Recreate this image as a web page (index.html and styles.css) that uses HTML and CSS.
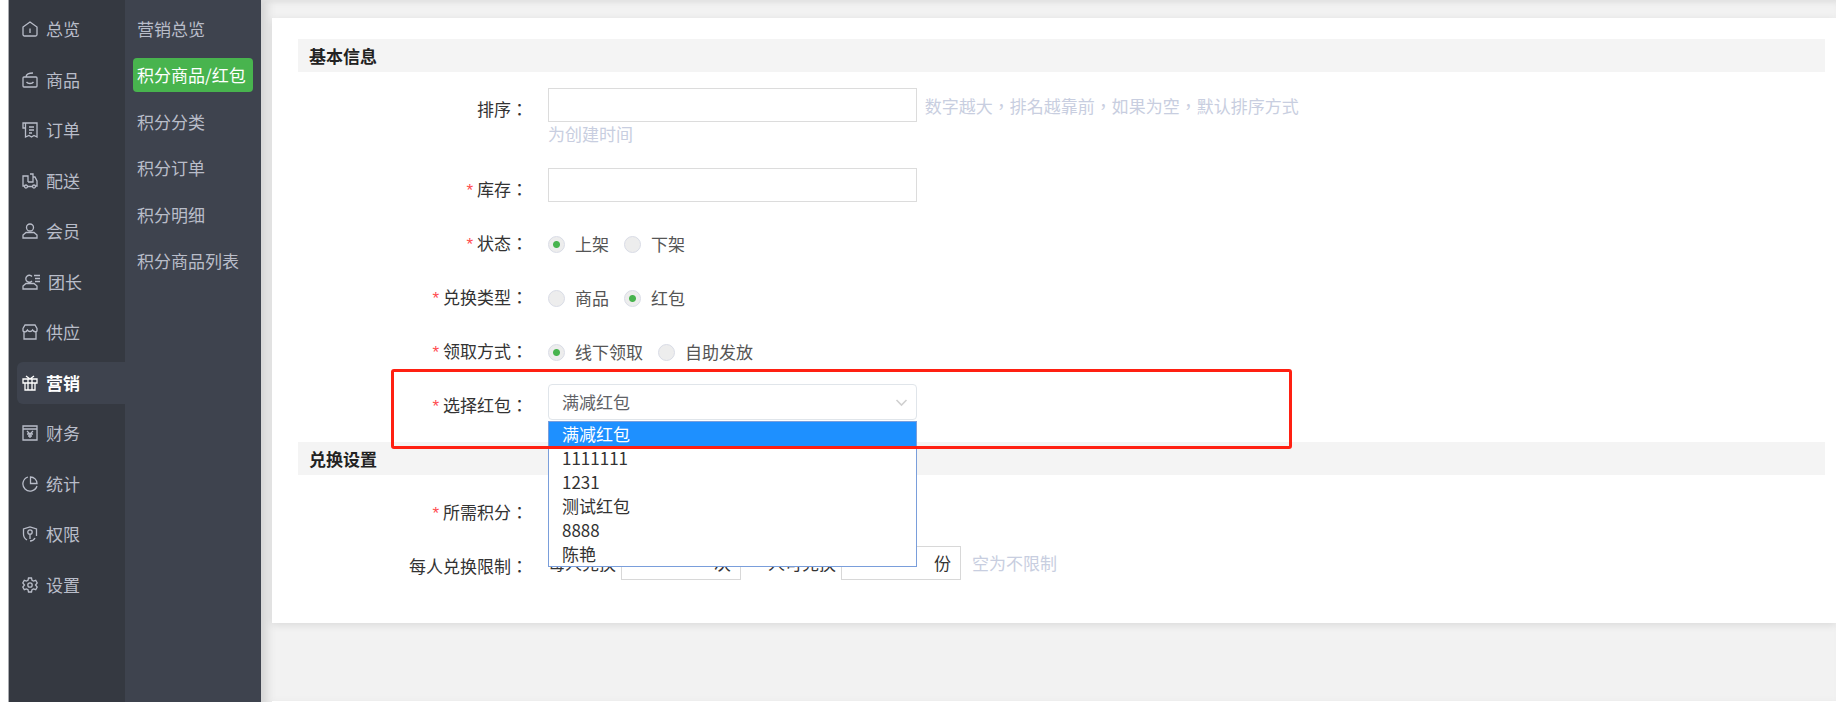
FILE: index.html
```html
<!DOCTYPE html>
<html lang="zh-CN">
<head>
    <meta charset="UTF-8">
    <meta name="viewport" content="width=device-width, initial-scale=1.0">
    <title>积分商品/红包</title>
    <link rel="stylesheet" href="styles.css">
</head>
<body>
    <div class="layout">
        <nav class="main-nav">
            <ul class="main-list">
                <li><a href="#"><svg class="icon" viewBox="0 0 16 16"><path d="M1 6 8 1l7 5v7.500a1.500 1.500 0 0 1-1.500 1.500h-11A1.500 1.500 0 0 1 1 13.500zM8 7.500V12"/></svg>总览</a></li>
                <li><a href="#"><svg class="icon" viewBox="0 0 16 16"><path d="M2 5h12a1 1 0 0 1 1 1v8a1 1 0 0 1-1 1H2a1 1 0 0 1-1-1V6a1 1 0 0 1 1-1zM4 5c0-3 3-4 7-4M4.500 10c1.500 2 5.500 2 7 0"/></svg>商品</a></li>
                <li><a href="#"><svg class="icon" viewBox="0 0 16 16"><path d="M3.500 6H1V1h14v14l-3-1.500L9.500 15 7 13.500 3.500 15V1M7 5h5M7 8h5M7 11h3"/></svg>订单</a></li>
                <li><a href="#"><svg class="icon" viewBox="0 0 16 16"><path d="M2.500 13H1V3h5v6M8 1h3v8H6M11 4h2l2 4v5h-1.500M5.500 13.500h5"/><circle cx="4" cy="13.500" r="1.500"/><circle cx="12" cy="13.500" r="1.500"/></svg>配送</a></li>
                <li><a href="#"><svg class="icon" viewBox="0 0 16 16"><circle cx="8" cy="4.500" r="3.500"/><path d="M4 9.500h8l3 2.500v3H1v-3z"/></svg>会员</a></li>
                <li><a href="#"><svg class="icon icon-wide" viewBox="0 0 18 16"><path d="M10 2.500A3.500 3.500 0 1 0 10 7M4 9.500h8l3 2.500v3H1v-3zM12 1.500h6M13 4.500h5M13 7.500h5"/></svg>团长</a></li>
                <li><a href="#"><svg class="icon" viewBox="0 0 16 16"><path d="M3 1h10l2 3.500V7l-1 1v7H2V8L1 7V4.500zM1 7c2 1.500 3 1 4.500-1C6.500 8 9.500 8 10.500 6 12 8 13 8.500 15 7"/></svg>供应</a></li>
                <li><a class="active" href="#"><svg class="icon" viewBox="0 0 16 16"><path d="M1 4h14v4H1zM3 8v7h10V8M6 4v11M10 4v11M8 4 4 1M8 4l4-3"/></svg>营销</a></li>
                <li><a href="#"><svg class="icon" viewBox="0 0 16 16"><path d="M1 1h14v14H1zM1 4h14M5 6l3 3 3-3M8 9v4M5 9h6M6 11h4"/></svg>财务</a></li>
                <li><a href="#"><svg class="icon" viewBox="0 0 16 16"><path d="M6 1a7.200 7.200 0 1 0 9 9M8.500 1v6.500H15A6.500 6.500 0 0 0 8.500 1z"/></svg>统计</a></li>
                <li><a href="#"><svg class="icon" viewBox="0 0 16 16"><path d="M5 14C2.500 12.500 1.500 11 1.500 8V3L8 1l6.500 2v7M8 15c2 0 4-1 5-3M8 8v5"/><circle cx="8" cy="6" r="2.200"/></svg>权限</a></li>
                <li><a href="#"><svg class="icon" viewBox="0 0 16 16"><path d="m6.500 1h3l.5 2.200 1.500.8 2.200-.7 1.500 2.700L13.500 8l1.700 2-1.500 2.700-2.200-.7-1.500.8-.5 2.200h-3L6 12.800 4.500 12l-2.200.7L.8 10l1.700-2L.8 6l1.500-2.700 2.200.7L6 3.200z"/><circle cx="8" cy="8" r="2.200"/></svg>设置</a></li>
            </ul>
        </nav>

        <nav class="sub-nav">
            <ul class="sub-list">
                <li><a href="#">营销总览</a></li>
                <li><a class="active" href="#">积分商品/红包</a></li>
                <li><a href="#">积分分类</a></li>
                <li><a href="#">积分订单</a></li>
                <li><a href="#">积分明细</a></li>
                <li><a href="#">积分商品列表</a></li>
            </ul>
        </nav>

        <main class="content">
            <form class="card">
                <h2 class="section-title">基本信息</h2>
                <div class="fields">
                    <div class="row row-note">
                        <label class="label" for="sort">排序<span class="mid" lang="zh-TW">：</span></label>
                        <div class="control">
                            <input class="text-input" type="text" id="sort">
                            <span class="hint mid" lang="zh-TW">数字越大，排名越靠前，如果为空，默认排序方式为创建时间</span>
                        </div>
                    </div>
                    <div class="row">
                        <label class="label required" for="stock">库存<span class="mid" lang="zh-TW">：</span></label>
                        <div class="control">
                            <input class="text-input" type="text" id="stock">
                        </div>
                    </div>
                    <div class="row">
                        <span class="label required" id="status-label">状态<span class="mid" lang="zh-TW">：</span></span>
                        <div class="control radios" role="radiogroup" aria-labelledby="status-label">
                            <label><input type="radio" name="status" checked>上架</label>
                            <label><input type="radio" name="status">下架</label>
                        </div>
                    </div>
                    <div class="row">
                        <span class="label required" id="type-label">兑换类型<span class="mid" lang="zh-TW">：</span></span>
                        <div class="control radios" role="radiogroup" aria-labelledby="type-label">
                            <label><input type="radio" name="type">商品</label>
                            <label><input type="radio" name="type" checked>红包</label>
                        </div>
                    </div>
                    <div class="row">
                        <span class="label required" id="receive-label">领取方式<span class="mid" lang="zh-TW">：</span></span>
                        <div class="control radios" role="radiogroup" aria-labelledby="receive-label">
                            <label><input type="radio" name="receive" checked>线下领取</label>
                            <label><input type="radio" name="receive">自助发放</label>
                        </div>
                    </div>
                    <div class="row row-marked">
                        <label class="label required" for="packet">选择红包<span class="mid" lang="zh-TW">：</span></label>
                        <div class="control">
                            <div class="select-box">
                                <select id="packet">
                                    <option>满减红包</option>
                                    <option>1111111</option>
                                    <option>1231</option>
                                    <option>测试红包</option>
                                    <option>8888</option>
                                    <option>陈艳</option>
                                </select>
                                <svg class="arrow" viewBox="0 0 12 8"><path d="m1 1 5 5 5-5"/></svg>
                                <ul class="options" role="listbox">
                                    <li class="selected" role="option" aria-selected="true">满减红包</li>
                                    <li role="option">1111111</li>
                                    <li role="option">1231</li>
                                    <li role="option">测试红包</li>
                                    <li role="option">8888</li>
                                    <li role="option">陈艳</li>
                                </ul>
                            </div>
                        </div>
                    </div>
                </div>

                <h2 class="section-title">兑换设置</h2>
                <div class="fields">
                    <div class="row">
                        <label class="label required" for="points">所需积分<span class="mid" lang="zh-TW">：</span></label>
                        <div class="control">
                            <input class="text-input" type="text" id="points">
                        </div>
                    </div>
                    <div class="row">
                        <span class="label">每人兑换限制<span class="mid" lang="zh-TW">：</span></span>
                        <div class="control limits">
                            <label for="times">每人兑换</label>
                            <span class="unit-input"><input type="text" id="times"><span>次</span></span>
                            <label class="second" for="count">人可兑换</label>
                            <span class="unit-input"><input type="text" id="count"><span>份</span></span>
                            <span class="hint">空为不限制</span>
                        </div>
                    </div>
                </div>
            </form>
            <div class="card footer-card"></div>
        </main>
    </div>
</body>
</html>
```

FILE: styles.css
```css
* {
    box-sizing: border-box;
}

body {
    margin: 0 0 0 8px;
    background: #fff;
    color: #333;
    font-family: "Noto Sans CJK SC", sans-serif;
    font-size: 17px;
    line-height: 24px;
    overflow: hidden;
}

ul {
    margin: 0;
    padding: 0;
    list-style: none;
}

input,
select {
    font: inherit;
    color: inherit;
}

.layout {
    display: flex;
    min-height: 100vh;
}

/* sidebar */
.main-nav {
    width: 117px;
    border-left: 1px solid #a9abaf;
    background: #353941;
}

.main-list {
    display: flex;
    flex-direction: column;
    justify-content: space-between;
    min-height: 598px;
    margin: 8px 0 0 8px;
}

.main-list a {
    display: flex;
    align-items: center;
    height: 42px;
    padding-left: 5px;
    border-radius: 6px 0 0 6px;
    color: #b9bdc9;
    text-decoration: none;
}

.main-list a.active {
    background: #3e434e;
    color: #fff;
    font-weight: 700;
}

.icon {
    flex: none;
    width: 16px;
    height: 16px;
    margin-right: 8px;
    fill: none;
    stroke: currentColor;
    stroke-width: 1.3;
}

.icon-wide {
    width: 18px;
}

.sub-nav {
    width: 136px;
    background: #3e434e;
}

.sub-list {
    display: flex;
    flex-direction: column;
    justify-content: space-between;
    min-height: 266px;
    margin: 12px 8px 0;
}

.sub-list a {
    display: block;
    padding: 0 4px;
    border-radius: 4px;
    color: #b9bdc9;
    line-height: 34px;
    text-decoration: none;
    white-space: nowrap;
}

.sub-list a.active {
    background: #48b44e;
    color: #fff;
}

/* content */
.content {
    flex: 1;
    min-width: 0;
    padding: 18px 0 0 11px;
    background: #f2f2f2;
    box-shadow: inset 0 6px 6px -4px #dedede, inset 12px 0 10px -6px #d4d4d4;
}

.card {
    padding: 21px 11px 20px 26px;
    background: #fff;
    box-shadow: 0 2px 8px rgba(0, 0, 0, 0.1);
}

.footer-card {
    margin-top: 78px;
    padding: 1px;
}

.section-title {
    margin: 0;
    padding-left: 11px;
    background: #f4f4f4;
    color: #222;
    font-size: 17px;
    font-weight: 700;
    line-height: 33px;
}

.fields {
    display: flex;
    flex-direction: column;
    gap: 10px;
    padding: 16px 0 14px;
}

.row {
    display: grid;
    grid-template-columns: 230px minmax(0, 760px);
    column-gap: 20px;
    min-height: 44px;
}

.row-note {
    min-height: 70px;
}

.label {
    line-height: 42px;
    text-align: right;
}

.required::before {
    content: "*";
    margin-right: 4px;
    color: #ff4d4f;
    font-family: "Liberation Sans", sans-serif;
    line-height: 1;
}

/* full-width marks centred in their cell */
.mid {
    font-family: "Noto Sans CJK TC", sans-serif;
}

.text-input {
    width: 369px;
    height: 34px;
    border: 1px solid #dcdcdc;
}

.hint {
    margin-left: 4px;
    color: #c8cee0;
}

.radios {
    display: flex;
    align-items: center;
    gap: 15px;
    color: #555;
}

.radios label {
    display: flex;
    align-items: center;
    gap: 10px;
}

.radios input {
    width: 17px;
    height: 17px;
    margin: 0;
    border: 1px solid #d9dce6;
    border-radius: 50%;
    background: #ededed;
    appearance: none;
}

.radios input:checked {
    background: radial-gradient(circle, #48b44e 3px, #ededed 4px);
}

.select-box {
    position: relative;
    width: 369px;
}

.select-box select {
    display: block;
    width: 100%;
    height: 36px;
    padding: 0 13px;
    border: 1px solid #e0e5ea;
    border-radius: 4px;
    background: #fff;
    color: #606266;
    appearance: none;
}

.arrow {
    position: absolute;
    top: 15px;
    right: 9px;
    width: 13px;
    height: 8px;
    fill: none;
    stroke: #d0d0d0;
    stroke-width: 1.6;
}

.options {
    position: absolute;
    top: 37px;
    left: 0;
    right: 0;
    z-index: 1;
    border: 1px solid #7a9edb;
    background: #fff;
}

.options li {
    padding-left: 13px;
}

.options .selected {
    background: #1e90ff;
    color: #fff;
}

.row-marked {
    position: relative;
    max-width: 1010px;
}

/* red frame round the packet field */
.row-marked::after {
    content: "";
    position: absolute;
    inset: -15px 16px -21px 93px;
    z-index: 2;
    border: 3px solid #ff2012;
    border-radius: 3px;
    pointer-events: none;
}

.limits {
    display: flex;
    align-items: center;
    height: 36px;
}

.unit-input {
    display: flex;
    align-items: center;
    width: 120px;
    height: 34px;
    margin-left: 5px;
    padding-right: 9px;
    border: 1px solid #d8d8d8;
}

.unit-input input {
    flex: 1;
    min-width: 0;
    border: 0;
    background: none;
}

.limits .second {
    margin-left: 27px;
}

.limits .hint {
    margin-left: 11px;
}
```
